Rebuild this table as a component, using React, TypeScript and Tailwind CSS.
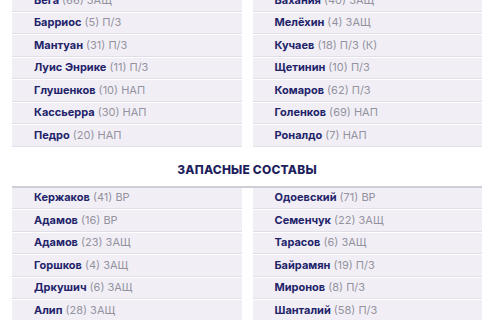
import React from 'react';

type Player = { name: string; num: number; pos: string };

const mainLeft: Player[] = [
  { name: 'Вега', num: 66, pos: 'ЗАЩ' },
  { name: 'Барриос', num: 5, pos: 'П/З' },
  { name: 'Мантуан', num: 31, pos: 'П/З' },
  { name: 'Луис Энрике', num: 11, pos: 'П/З' },
  { name: 'Глушенков', num: 10, pos: 'НАП' },
  { name: 'Кассьерра', num: 30, pos: 'НАП' },
  { name: 'Педро', num: 20, pos: 'НАП' },
];

const mainRight: Player[] = [
  { name: 'Вахания', num: 40, pos: 'ЗАЩ' },
  { name: 'Мелёхин', num: 4, pos: 'ЗАЩ' },
  { name: 'Кучаев', num: 18, pos: 'П/З (К)' },
  { name: 'Щетинин', num: 10, pos: 'П/З' },
  { name: 'Комаров', num: 62, pos: 'П/З' },
  { name: 'Голенков', num: 69, pos: 'НАП' },
  { name: 'Роналдо', num: 7, pos: 'НАП' },
];

const subsLeft: Player[] = [
  { name: 'Кержаков', num: 41, pos: 'ВР' },
  { name: 'Адамов', num: 16, pos: 'ВР' },
  { name: 'Адамов', num: 23, pos: 'ЗАЩ' },
  { name: 'Горшков', num: 4, pos: 'ЗАЩ' },
  { name: 'Дркушич', num: 6, pos: 'ЗАЩ' },
  { name: 'Алип', num: 28, pos: 'ЗАЩ' },
];

const subsRight: Player[] = [
  { name: 'Одоевский', num: 71, pos: 'ВР' },
  { name: 'Семенчук', num: 22, pos: 'ЗАЩ' },
  { name: 'Тарасов', num: 6, pos: 'ЗАЩ' },
  { name: 'Байрамян', num: 19, pos: 'П/З' },
  { name: 'Миронов', num: 8, pos: 'П/З' },
  { name: 'Шанталий', num: 58, pos: 'П/З' },
];

const Row: React.FC<{ p: Player }> = ({ p }) => (
  <div className="h-[21.5px] mb-px flex items-center pl-[22px] bg-[#f1eff5] border-b border-[#e0dee6] text-[11px] leading-none whitespace-nowrap">
    <span className="font-bold text-[#23236a]">{p.name}</span>
    <span className="ml-[3px] text-[#94929f]">({p.num}) {p.pos}</span>
  </div>
);

const Column: React.FC<{ list: Player[] }> = ({ list }) => (
  <div>
    {list.map((p, i) => (
      <Row key={i} p={p} />
    ))}
  </div>
);

export default function App() {
  return (
    <div className="w-[500px] h-[320px] overflow-hidden bg-white font-['Inter','Noto_Sans',sans-serif]">
      {/* основной состав */}
      <div className="-mt-[10px] pl-3 pr-[18px] grid grid-cols-2 gap-[11px]">
        <Column list={mainLeft} />
        <Column list={mainRight} />
      </div>

      {/* запасные */}
      <div className="pl-3 pr-[18px]">
        <h3 className="mt-[15px] mb-[9px] text-center text-[12px] font-extrabold tracking-[0.2px] text-[#1f1f5e] leading-[14px]">
          ЗАПАСНЫЕ СОСТАВЫ
        </h3>
        <div className="grid grid-cols-2 gap-[11px] border-t-2 border-[#cfcdd6]">
          <Column list={subsLeft} />
          <Column list={subsRight} />
        </div>
      </div>
    </div>
  );
}
